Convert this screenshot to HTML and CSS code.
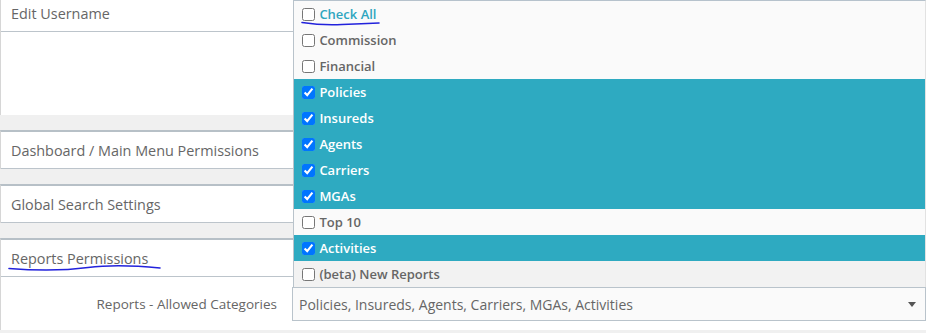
FILE: index.html
```html
<!DOCTYPE html>
<html lang="en">
<head>
    <meta charset="UTF-8">
    <meta name="viewport" content="width=device-width, initial-scale=1.0">
    <title>User Permissions</title>
    <link rel="stylesheet" href="styles.css">
</head>
<body>
    <div class="page">
        <div class="card">
            <div class="card-head">Edit Username</div>
            <div class="card-body card-body--tall"></div>
        </div>

        <div class="card">
            <div class="card-head">Dashboard / Main Menu Permissions</div>
        </div>

        <div class="card">
            <div class="card-head">Global Search Settings</div>
        </div>

        <div class="card">
            <div class="card-head">Reports Permissions</div>
            <div class="card-body">
                <div class="form-row">
                    <label class="form-label">Reports - Allowed Categories</label>
                    <div class="multi">
                        <ul class="multi-list">
                            <li class="opt opt--all"><input type="checkbox"> Check All</li>
                            <li class="opt"><input type="checkbox"> Commission</li>
                            <li class="opt"><input type="checkbox"> Financial</li>
                            <li class="opt selected"><input type="checkbox" checked> Policies</li>
                            <li class="opt selected"><input type="checkbox" checked> Insureds</li>
                            <li class="opt selected"><input type="checkbox" checked> Agents</li>
                            <li class="opt selected"><input type="checkbox" checked> Carriers</li>
                            <li class="opt selected"><input type="checkbox" checked> MGAs</li>
                            <li class="opt"><input type="checkbox"> Top 10</li>
                            <li class="opt selected"><input type="checkbox" checked> Activities</li>
                            <li class="opt hover"><input type="checkbox"> (beta) New Reports</li>
                        </ul>
                        <div class="multi-select">
                            <span>Policies, Insureds, Agents, Carriers, MGAs, Activities</span>
                            <span class="caret"></span>
                        </div>
                    </div>
                </div>
            </div>
        </div>
    </div>

    <!-- pen marks drawn on the screenshot -->
    <svg class="marks" width="926" height="333" viewBox="0 0 926 333">
        <path d="M302 22.5 Q322 25.5 342 24.5 T379 23" />
        <path d="M9 268.5 C35 270.5 65 270.5 88 267.5 S140 266 160 268" />
    </svg>
</body>
</html>
```

FILE: styles.css
```css
body {
    margin: 0;
    background: #f0f0f0;
    font-family: 'Open Sans', 'Liberation Sans', sans-serif;
    color: #666;
    overflow: hidden;
}
.page {
    margin-top: -7px;
    width: 926px;
}
.card {
    background: white;
    border-top: 2px solid #b7c0c7;
    border-left: 1px solid #d6d6d6;
    margin-bottom: 15px;
}
.card-head {
    height: 36px;
    line-height: 38px;
    padding-left: 10px;
    font-size: 14.4px;
    border-bottom: 1px solid #bcc4cb;
}
.card-body {
    padding: 10px 0 9px 0;
}
.card-body--tall {
    height: 83px;
    padding: 0;
}
.form-row {
    display: flex;
    align-items: center;
}
.form-label {
    width: 276px;
    text-align: right;
    font-size: 13.5px;
    color: #666;
    padding-right: 15px;
}
.multi {
    position: relative;
    flex: 1;
}
.multi-select {
    height: 32px;
    border: 1px solid #b9c3cb;
    background: #fafafa;
    display: flex;
    align-items: center;
    justify-content: space-between;
    padding: 0 9px 0 6px;
    font-size: 14px;
    color: #666;
}
.caret {
    width: 0;
    height: 0;
    border-left: 4px solid transparent;
    border-right: 4px solid transparent;
    border-top: 5px solid #555;
    margin-top: 1px;
}
.multi-list {
    position: absolute;
    left: 1px;
    right: 0;
    bottom: 100%;
    margin: 0;
    padding: 0;
    list-style: none;
    background: #fafafa;
    border-top: 1px solid #b6c2cc;
    border-left: 1px solid #b9c3cb;
    border-right: 1px solid #e2e2e2;
}
.opt {
    height: 26px;
    display: flex;
    align-items: center;
    padding-left: 8px;
    font-size: 13px;
    font-weight: 600;
    color: #666;
    white-space: pre;
}
.opt input {
    width: 13px;
    height: 13px;
    margin: 0 1px 0 0;
}
.opt--all {
    color: #2ea6bf;
}
.opt.selected {
    background: #2eaac1;
    color: white;
}
.opt.hover {
    background: #f2f2f2;
}
.marks {
    position: absolute;
    left: 0;
    top: 0;
    pointer-events: none;
}
.marks path {
    fill: none;
    stroke: #2222dc;
    stroke-width: 1.6;
    stroke-linecap: round;
}
```
